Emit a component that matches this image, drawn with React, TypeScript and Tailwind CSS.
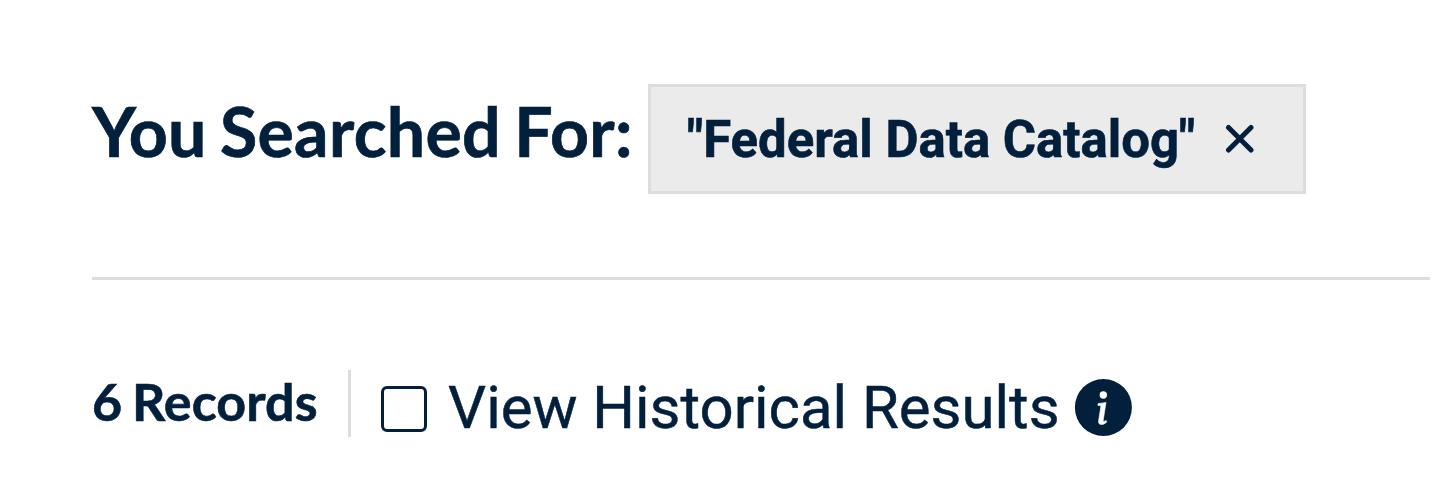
export default function App() {
  return (
    <main className="h-[504px] w-full overflow-hidden bg-white pr-[2px] pl-[92px] text-[#021f3c]">
      <section className="flex h-[280px] items-start border-b-[3px] border-[#dcdddd] pt-[84px]">
        <h1 className="w-[556px] shrink-0 whitespace-nowrap pt-[7px] font-['Lato',sans-serif] text-[68px] leading-[80px] font-bold tracking-[0.33px] [-webkit-text-stroke:0.7px_currentColor] [word-spacing:-3.7px]">You Searched For:</h1>
        <div className="flex h-[110px] w-[658px] items-center border-[3px] border-[#dcdddd] bg-[#ebebeb] pl-[36px] font-['Roboto',sans-serif]">
          <span className="w-[538px] shrink-0 pt-[2px] text-[50.9px] leading-[60px] font-bold whitespace-nowrap [-webkit-text-stroke:0.6px_currentColor]">"Federal Data Catalog"</span>
          <button aria-label="Remove search term">
            <svg width="30" height="30" viewBox="0 0 30 30" fill="none" stroke="currentColor" strokeWidth="5" strokeLinecap="round"><path d="M3.5 3.5 26 26M26 3.5 3.5 26" /></svg>
          </button>
        </div>
      </section>
      <section className="flex pt-[90px]">
        <h2 className="-mt-[2px] h-[69px] w-[256px] shrink-0 font-['Lato',sans-serif] text-[52px] leading-[67px] font-bold whitespace-nowrap tracking-[0.1px] [-webkit-text-stroke:0.6px_currentColor] [word-spacing:-3px]">6 Records</h2>
        <div className="h-[67px] w-[3px] shrink-0 bg-[#dcdddd]" />
        <div className="flex h-[76px] items-center pl-[30px]">
          <span className="mt-[2px] h-[46px] w-[46px] shrink-0 rounded-[6px] border-[3px] border-current" />
          <span className="ml-[21px] w-[626px] shrink-0 font-['Roboto',sans-serif] text-[59.9px] leading-[70px] whitespace-nowrap [-webkit-text-stroke:0.5px_currentColor]">View Historical Results</span>
          <svg className="shrink-0" width="58" height="58" viewBox="0 0 58 58">
            <circle cx="29.4" cy="28.5" r="28.5" fill="currentColor" />
            <circle cx="29.3" cy="16" r="3.7" fill="white" />
            <path d="M24.2 24.5c2.5-.2 5.1-.6 7.8-1.1l-2.8 18.1c-.1.7.1.9.7.9.7 0 1.5-.5 2.2-1l.7 1.5c-1.8 1.7-3.6 2.6-5.3 2.6-2.3 0-3.3-1.4-2.9-3.8l2.1-13.5c.2-1.2-.2-1.8-1.4-1.8h-1.4z" fill="white" stroke="white" strokeWidth="0.6" />
          </svg>
        </div>
      </section>
    </main>
  )
}
